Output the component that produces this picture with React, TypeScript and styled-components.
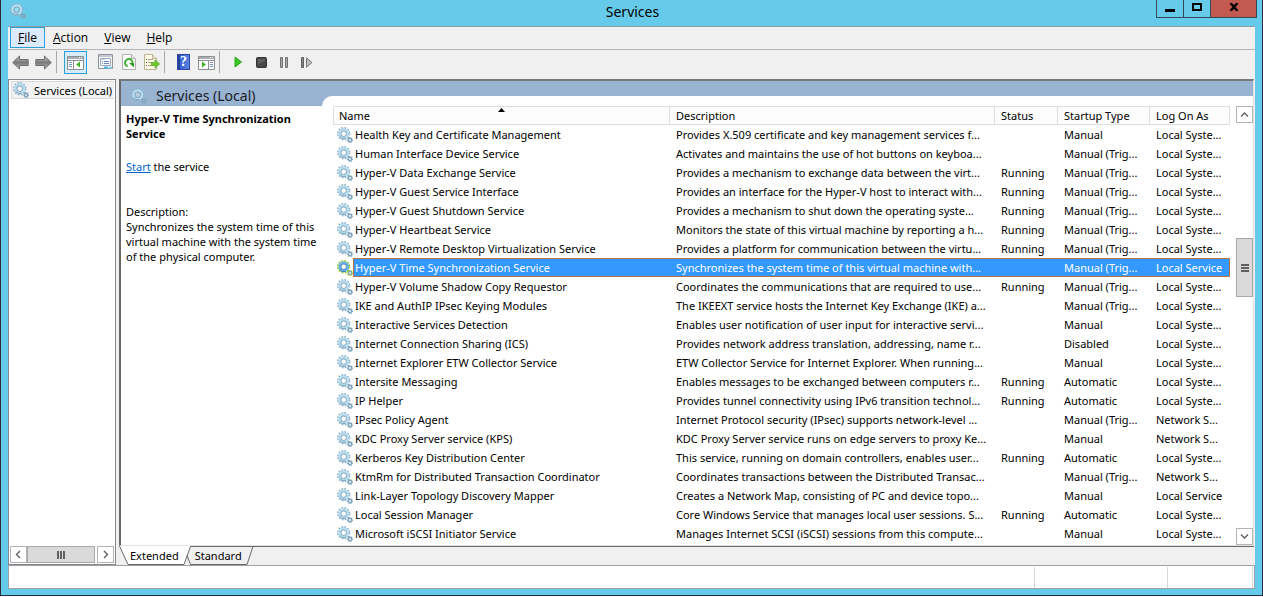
import React from 'react';
import styled, { createGlobalStyle, css } from 'styled-components';

const GlobalStyle = createGlobalStyle`
  *, *::before, *::after { box-sizing: border-box; }
  body {
    margin: 0;
    background: #ffffff;
    color: #000000;
    font: 11px/15px 'Noto Sans', 'Open Sans', sans-serif;
  }
  button { font: inherit; color: inherit; }
  svg { flex: none; }
`;

const line = '#a0a0a0';

const Desktop = styled.div`
  display: flex;
  flex-direction: column;
  min-height: 100vh;
  padding-bottom: 1px;
`;

const Window = styled.div`
  flex: 1;
  display: flex;
  flex-direction: column;
  padding: 0 7px 6px;
  background: #66caea;
  border: solid #2b2b3a;
  border-width: 0 1px 1px;
`;

const TitleBar = styled.header`
  display: grid;
  grid-template-columns: 1fr auto 1fr;
  align-items: start;
  height: 26px;
  padding: 0 0 0 2px;
`;

const TitleIcon = styled.span`
  display: flex;
  padding-top: 3px;
`;

const Title = styled.h1`
  margin: 0;
  font-size: 14px;
  font-weight: 400;
  line-height: 24px;
`;

const WindowButtons = styled.div`
  display: flex;
  justify-content: flex-end;
  margin-right: -2px;
`;

const WindowButton = styled.button<{ $close?: boolean }>`
  display: flex;
  align-items: center;
  justify-content: center;
  width: ${p => (p.$close ? 47 : 28)}px;
  height: 18px;
  margin-left: -1px;
  padding: 0 0 3px;
  background: ${p => (p.$close ? '#c35a50' : 'transparent')};
  border: 1px solid #2f4a55;
  border-top: 0;
`;

const MenuBar = styled.nav`
  display: flex;
  height: 24px;
  padding: 0 2px 1px;
  background: #f0f0f0;
  border: solid #8a9fa8;
  border-width: 1px 0;
  border-bottom-color: #b4b4b8;
`;

const MenuButton = styled.button<{ $active?: boolean }>`
  padding: 0 7px;
  font-size: 12px;
  font-family: 'Open Sans', sans-serif;
  background: ${p => (p.$active ? '#dbeafc' : 'transparent')};
  border: 1px solid ${p => (p.$active ? '#2f9fdc' : 'transparent')};
`;

const ToolBar = styled.div`
  display: flex;
  align-items: center;
  height: 29px;
  padding: 0 1px 5px;
  background: #f0f0f0;
`;

const ToolButton = styled.button<{ $active?: boolean }>`
  display: flex;
  align-items: center;
  justify-content: center;
  width: 23px;
  height: 23px;
  padding: 0;
  background: ${p => (p.$active ? '#d5ecfb' : 'transparent')};
  border: ${p => (p.$active ? '1px solid #2f9fdc' : '0')};
`;

const ToolSeparator = styled.span`
  width: 1px;
  height: 22px;
  margin: 0 7px 0 1px;
  background: #a8a8a8;
`;

const ToolGap = styled.span`
  width: 7px;
`;

const Body = styled.main`
  flex: 1;
  display: grid;
  grid-template-columns: 108px 1fr;
  column-gap: 3px;
  padding-right: 1px;
  background: #f0f0f0;
`;

const TreePane = styled.aside`
  display: flex;
  flex-direction: column;
  min-width: 0;
  background: #ffffff;
  border: 1px solid #828790;
`;

const TreeItem = styled.button`
  display: flex;
  align-items: center;
  gap: 5px;
  height: 18px;
  margin: 1px 1px 0 2px;
  padding: 0 0 0 1px;
  white-space: nowrap;
  background: #f2f2f2;
  border: 1px solid #dadada;
  border-right: 0;
`;

const Spacer = styled.div<{ $grow?: number }>`
  flex: ${p => p.$grow ?? 1};
`;

const ScrollButton = styled.button`
  display: flex;
  align-items: center;
  justify-content: center;
  width: 17px;
  height: 17px;
  padding: 0;
  background: #ffffff;
  border: 1px solid #b4b4b4;
`;

const HorizontalScroll = styled.div`
  display: flex;
  padding: 0 1px 1px;
`;

const Grip = styled.span<{ $vertical?: boolean }>`
  width: 8px;
  height: 8px;
  background: repeating-linear-gradient(
    ${p => (p.$vertical ? '180deg' : '90deg')},
    #606060 0 2px,
    transparent 2px 3px
  );
`;

const scrollThumb = css`
  display: flex;
  align-items: center;
  justify-content: center;
  background: #dadada;
  border: 1px solid #a8a8a8;
`;

const HorizontalThumb = styled.div`
  ${scrollThumb}
  flex: 1;
  margin-right: 2px;
`;

const VerticalThumb = styled.div`
  ${scrollThumb}
  height: 59px;
`;

const ResultArea = styled.div`
  display: flex;
  flex-direction: column;
  min-width: 0;
`;

const ResultPane = styled.section`
  flex: 1;
  display: grid;
  grid-template-columns: 201px 1fr;
  background: #99b4d1;
  border: solid #696969;
  border-width: 2px 1px 1px 2px;
  border-top-color: #75787c;
  border-right-color: #e3e3e3;
  border-bottom-color: #e3e3e3;
`;

const ExtendedColumn = styled.div`
  display: flex;
  flex-direction: column;
`;

const Heading = styled.h2`
  display: flex;
  align-items: center;
  gap: 9px;
  height: 25px;
  margin: 0;
  padding: 5px 0 0 10px;
  color: #1a1a28;
  font-size: 14px;
  font-weight: 400;
  line-height: 20px;
`;

const Details = styled.div`
  flex: 1;
  padding: 5px 0 0 5px;
  background: #ffffff;
  white-space: nowrap;
`;

const ServiceTitle = styled.h3`
  margin: 0 0 18px;
  font-size: 11px;
  font-weight: 700;
`;

const Paragraph = styled.p`
  margin: 0 0 30px;
`;

const StartLink = styled.a`
  color: #0066cc;
  text-decoration: underline;
`;

const ListPanel = styled.div`
  display: flex;
  align-items: stretch;
  gap: 6px;
  min-width: 0;
  margin-top: 15px;
  padding: 10px 0 0 11px;
  background: #ffffff;
  border-top-left-radius: 10px;
`;

const TableArea = styled.div`
  flex: 1;
  min-width: 0;
`;

const Table = styled.table`
  width: 100%;
  table-layout: fixed;
  border-collapse: separate;
  border-spacing: 0;
  white-space: nowrap;
`;

const Col = styled.col<{ $width?: number }>`
  width: ${p => (p.$width ? `${p.$width}px` : 'auto')};
`;

const HeadCell = styled.th`
  height: 19px;
  padding: 0 0 0 6px;
  text-align: left;
  font-weight: 400;
  background: #fcfcfc;
  border: solid #dedede;
  border-width: 1px 1px 1px 0;
  &:first-child { border-left-width: 1px; padding: 0 5px; }
`;

const SortHeader = styled.div`
  display: grid;
  grid-template-columns: 1fr auto 1fr;
  align-items: start;
`;

const selectedStyle = css`
  color: #ffffff;
  background: #3399ff;
  border: solid #b8743c;
  border-width: 1px 0;
`;

const Cell = styled.td`
  height: 19px;
  padding: 0 0 0 6px;
  overflow: hidden;
`;

const NameCell = styled.td`
  height: 19px;
  padding: 0 0 0 4px;
`;

const NameContent = styled.div`
  display: flex;
  align-items: center;
  height: 19px;
`;

const NameLabel = styled.span`
  flex: 1;
  height: 19px;
  padding-left: 2px;
  line-height: 19px;
`;

const Row = styled.tr<{ $selected: boolean }>`
  ${p =>
    p.$selected &&
    css`
      ${Cell} { ${selectedStyle} }
      ${Cell}:last-child { border-right-width: 1px; }
      ${NameLabel} {
        ${selectedStyle}
        border-left-width: 1px;
        padding-left: 1px;
        line-height: 17px;
      }
    `}
`;

const VerticalScroll = styled.div`
  display: flex;
  flex-direction: column;
  width: 17px;
`;

const Tabs = styled.div`
  display: flex;
  height: 19px;
`;

const Tab = styled.button`
  display: flex;
  align-items: stretch;
  padding: 0;
  background: transparent;
  border: 0;
`;

const TabLabel = styled.span<{ $current?: boolean }>`
  padding: ${p => (p.$current ? '2px' : '1px')} 2px 0 1px;
  line-height: 16px;
  background: ${p => (p.$current ? '#ffffff' : '#f0f0f0')};
  border: solid #696969;
  border-width: ${p => (p.$current ? '0 0 1px' : '1px 0')};
`;

const TabRule = styled.div`
  flex: 1;
  border-top: 1px solid #696969;
`;

const StatusBar = styled.footer`
  display: grid;
  grid-template-columns: 1fr 133px 85px 1px;
  height: 24px;
  padding-top: 1px;
  background: #ffffff;
  border: 1px solid ${line};
`;

const StatusPart = styled.span`
  border-right: 1px solid #d7d7d7;
`;

function Gears({ selected = false }: { selected?: boolean }) {
  const teeth = selected ? '#9acb1c' : '#8db2c8';
  const body = selected ? '#6db4e6' : '#b9def0';
  const hole = selected ? '#2f78b8' : '#7299b3';
  return (
    <svg width="16" height="16" viewBox="0 0 16 16" fill="none" aria-hidden="true">
      <circle cx="6.7" cy="6.7" r="5.7" stroke={teeth} strokeWidth="2" strokeDasharray="1.7 1.284" />
      <circle cx="6.7" cy="6.7" r="4.2" stroke={body} strokeWidth="2.6" />
      <circle cx="6.7" cy="6.7" r="2.8" fill="#ffffff" fillOpacity=".35" stroke={hole} strokeWidth=".9" />
      <path d="M2.6 9.4A4.9 4.9 0 0 0 8.7 11.2" stroke={hole} strokeWidth=".9" />
      <circle cx="13" cy="13" r="2.4" stroke={teeth} strokeWidth="1.4" strokeDasharray="1.1 .785" />
      <circle cx="13" cy="13" r="1.6" stroke="#7fa3b9" strokeWidth="1.4" />
    </svg>
  );
}

function Arrow({ forward = false }: { forward?: boolean }) {
  return (
    <svg width="17" height="15" viewBox="0 0 17 15" aria-hidden="true">
      <defs>
        <linearGradient id="arrow-fill" x1="0" y1="0" x2="0" y2="1">
          <stop offset="0" stopColor="#c4c4c4" />
          <stop offset=".5" stopColor="#7a7a7a" />
          <stop offset="1" stopColor="#b4b4b4" />
        </linearGradient>
      </defs>
      <path
        d={forward ? 'M16.3 7.5 9.5 1v3.5H.8v6h8.7V14z' : 'M.7 7.5 7.5 1v3.5h8.7v6H7.5V14z'}
        fill="url(#arrow-fill)"
        stroke="#707070"
      />
    </svg>
  );
}

function PaneIcon({ mirrored = false }: { mirrored?: boolean }) {
  return (
    <svg width="17" height="15" viewBox="0 0 17 15" aria-hidden="true">
      <path d="M.5 1.5h16v13H.5z" fill="#fff" stroke="#8c8f94" />
      <path d="M1 2h15v2H1z" fill="#a9adb3" />
      <path d="M12 2.5h1M14 2.5h1" stroke="#fff" />
      <path d="M1 5.5h15" stroke="#8c8f94" />
      {mirrored ? (
        <>
          <path d="M10.5 6v8" stroke="#8c8f94" />
          <path d="M12 7.5h3M12 9.5h3M12 11.5h3" stroke="#7393c0" />
          <path d="M4 6.5v6l4-3z" fill="#43b02a" />
        </>
      ) : (
        <>
          <path d="M6.5 6v8" stroke="#8c8f94" />
          <path d="M2 7.5h3M2 9.5h3M2 11.5h3" stroke="#7393c0" />
          <path d="M13 6.5v6l-4-3z" fill="#43b02a" />
        </>
      )}
    </svg>
  );
}

function PropertiesIcon() {
  return (
    <svg width="16" height="16" viewBox="0 0 16 16" aria-hidden="true">
      <path d="M.5.5h14v14H.5z" fill="#f7f8fa" stroke="#90949a" />
      <path d="M1 1h13v2H1z" fill="#c5c9cf" />
      <path d="M2.5 4.5h10v7h-10z" fill="#fff" stroke="#9aa9bd" />
      <path d="M3 5h4v1H3z" fill="#c8d4e4" />
      <path d="M4 7.5h1M6 7.5h5M4 9.5h1M6 9.5h5" stroke="#6c87b0" />
      <path d="M6 13.5h4" stroke="#49b8ec" strokeWidth="2" />
      <path d="M11 13.5h3" stroke="#8ed2f2" strokeWidth="2" />
    </svg>
  );
}

function RefreshIcon() {
  return (
    <svg width="14" height="16" viewBox="0 0 14 16" fill="none" aria-hidden="true">
      <path d="M.5.5h9l4 4v11H.5z" fill="#fdfdfd" stroke="#b0b0b0" />
      <path d="M9.5.5v4h4" fill="#e8e8e8" stroke="#b0b0b0" />
      <path d="M5.6 12.2A3.7 3.7 0 1 1 10.4 9.4" stroke="#3fae35" strokeWidth="2" />
      <path d="M7 9h5v4.5z" fill="#2f9a2a" />
    </svg>
  );
}

function ExportIcon() {
  return (
    <svg width="16" height="16" viewBox="0 0 16 16" aria-hidden="true">
      <path d="M.5.5h8l4 4v11H.5z" fill="#fffbe2" stroke="#b9b39a" />
      <path d="M8.5.5v4h4" fill="#efe9cc" stroke="#b9b39a" />
      <path d="M2 5.5h1M2 8.5h1M2 11.5h1" stroke="#555" />
      <path d="M4 5.5h5M4 8.5h4M4 11.5h5" stroke="#a9a58e" />
      <path d="M7.5 8.5h3.5V5.8L15.6 10 11 14.2v-2.7H7.5z" fill="#6fc92c" stroke="#4fa51f" strokeWidth=".7" />
    </svg>
  );
}

const HelpBadge = styled.span`
  width: 13px;
  height: 16px;
  color: #ffffff;
  background: linear-gradient(90deg, #24409c 2px, #3a63d0 2px, #5a82e2);
  border: 1px solid #2a479f;
  font: 700 14px/14px 'Liberation Serif', serif;
  text-align: center;
`;

function PlayIcon() {
  return (
    <svg width="9" height="12" viewBox="0 0 9 12" aria-hidden="true">
      <path d="M1 1v10l6.5-5z" fill="#35c81e" stroke="#2da31c" />
    </svg>
  );
}

function StopIcon() {
  return (
    <svg width="11" height="11" viewBox="0 0 11 11" aria-hidden="true">
      <rect x=".5" y=".5" width="10" height="10" rx="1" fill="#484848" stroke="#333" />
      <path d="M2 2h7v2L2 7z" fill="#606060" />
    </svg>
  );
}

function PauseIcon() {
  return (
    <svg width="9" height="11" viewBox="0 0 9 11" aria-hidden="true">
      <path d="M.5.5h2v10h-2zM5.5.5h2v10h-2z" fill="#a8a8a8" stroke="#727272" />
    </svg>
  );
}

function RestartIcon() {
  return (
    <svg width="13" height="11" viewBox="0 0 13 11" aria-hidden="true">
      <path d="M.5.5h2v10h-2z" fill="#888" stroke="#606060" />
      <path d="M5.5.8v9.4l5.5-4.7z" fill="#bdbdbd" stroke="#7a7a7a" />
    </svg>
  );
}

const chevrons = {
  up: 'M1 6.5 4.5 3 8 6.5',
  down: 'M1 2.5 4.5 6 8 2.5',
  left: 'M6 1 2.5 4.5 6 8',
  right: 'M3 1l3.5 3.5L3 8',
};

function Chevron({ to }: { to: keyof typeof chevrons }) {
  return (
    <svg width="9" height="9" viewBox="0 0 9 9" fill="none" aria-hidden="true">
      <path d={chevrons[to]} stroke="#606060" strokeWidth="1.4" />
    </svg>
  );
}

type Service = [name: string, description: string, status: string, startup: string, logOn: string];

const SYS = 'Local Syste...';
const NET = 'Network S...';
const TRIG = 'Manual (Trig...';

const services: Service[] = [
  ['Health Key and Certificate Management', 'Provides X.509 certificate and key management services f...', '', 'Manual', SYS],
  ['Human Interface Device Service', 'Activates and maintains the use of hot buttons on keyboa...', '', TRIG, SYS],
  ['Hyper-V Data Exchange Service', 'Provides a mechanism to exchange data between the virt...', 'Running', TRIG, SYS],
  ['Hyper-V Guest Service Interface', 'Provides an interface for the Hyper-V host to interact with...', 'Running', TRIG, SYS],
  ['Hyper-V Guest Shutdown Service', 'Provides a mechanism to shut down the operating syste...', 'Running', TRIG, SYS],
  ['Hyper-V Heartbeat Service', 'Monitors the state of this virtual machine by reporting a h...', 'Running', TRIG, SYS],
  ['Hyper-V Remote Desktop Virtualization Service', 'Provides a platform for communication between the virtu...', 'Running', TRIG, SYS],
  ['Hyper-V Time Synchronization Service', 'Synchronizes the system time of this virtual machine with...', '', TRIG, 'Local Service'],
  ['Hyper-V Volume Shadow Copy Requestor', 'Coordinates the communications that are required to use...', 'Running', TRIG, SYS],
  ['IKE and AuthIP IPsec Keying Modules', 'The IKEEXT service hosts the Internet Key Exchange (IKE) a...', '', TRIG, SYS],
  ['Interactive Services Detection', 'Enables user notification of user input for interactive servi...', '', 'Manual', SYS],
  ['Internet Connection Sharing (ICS)', 'Provides network address translation, addressing, name r...', '', 'Disabled', SYS],
  ['Internet Explorer ETW Collector Service', 'ETW Collector Service for Internet Explorer. When running...', '', 'Manual', SYS],
  ['Intersite Messaging', 'Enables messages to be exchanged between computers r...', 'Running', 'Automatic', SYS],
  ['IP Helper', 'Provides tunnel connectivity using IPv6 transition technol...', 'Running', 'Automatic', SYS],
  ['IPsec Policy Agent', 'Internet Protocol security (IPsec) supports network-level ...', '', TRIG, NET],
  ['KDC Proxy Server service (KPS)', 'KDC Proxy Server service runs on edge servers to proxy Ke...', '', 'Manual', NET],
  ['Kerberos Key Distribution Center', 'This service, running on domain controllers, enables user...', 'Running', 'Automatic', SYS],
  ['KtmRm for Distributed Transaction Coordinator', 'Coordinates transactions between the Distributed Transac...', '', TRIG, NET],
  ['Link-Layer Topology Discovery Mapper', 'Creates a Network Map, consisting of PC and device topo...', '', 'Manual', 'Local Service'],
  ['Local Session Manager', 'Core Windows Service that manages local user sessions. S...', 'Running', 'Automatic', SYS],
  ['Microsoft iSCSI Initiator Service', 'Manages Internet SCSI (iSCSI) sessions from this compute...', '', 'Manual', SYS],
];

const SELECTED = 'Hyper-V Time Synchronization Service';

export default function App() {
  return (
    <Desktop>
      <GlobalStyle />
      <Window>
        <TitleBar>
          <TitleIcon><Gears /></TitleIcon>
          <Title>Services</Title>
          <WindowButtons>
            <WindowButton aria-label="Minimize">
              <svg width="10" height="10" viewBox="0 0 10 10"><path d="M0 7h10v3H0z" /></svg>
            </WindowButton>
            <WindowButton aria-label="Maximize">
              <svg width="10" height="8" viewBox="0 0 10 8"><path d="M1 1h8v6H1z" fill="none" stroke="#000" strokeWidth="2" /></svg>
            </WindowButton>
            <WindowButton $close aria-label="Close">
              <svg width="10" height="8" viewBox="0 0 10 8"><path d="M1.5 0l7 8M8.5 0l-7 8" stroke="#000" strokeWidth="2.4" /></svg>
            </WindowButton>
          </WindowButtons>
        </TitleBar>

        <MenuBar>
          <MenuButton $active><u>F</u>ile</MenuButton>
          <MenuButton><u>A</u>ction</MenuButton>
          <MenuButton><u>V</u>iew</MenuButton>
          <MenuButton><u>H</u>elp</MenuButton>
        </MenuBar>

        <ToolBar>
          <ToolButton aria-label="Back"><Arrow /></ToolButton>
          <ToolButton aria-label="Forward"><Arrow forward /></ToolButton>
          <ToolSeparator />
          <ToolButton $active aria-label="Show or hide console tree"><PaneIcon /></ToolButton>
          <ToolGap />
          <ToolButton aria-label="Properties"><PropertiesIcon /></ToolButton>
          <ToolButton aria-label="Refresh"><RefreshIcon /></ToolButton>
          <ToolButton aria-label="Export list"><ExportIcon /></ToolButton>
          <ToolSeparator />
          <ToolButton aria-label="Help"><HelpBadge>?</HelpBadge></ToolButton>
          <ToolButton aria-label="Show or hide action pane"><PaneIcon mirrored /></ToolButton>
          <ToolSeparator />
          <ToolButton aria-label="Start service"><PlayIcon /></ToolButton>
          <ToolButton aria-label="Stop service"><StopIcon /></ToolButton>
          <ToolButton aria-label="Pause service"><PauseIcon /></ToolButton>
          <ToolButton aria-label="Restart service"><RestartIcon /></ToolButton>
        </ToolBar>

        <Body>
          <TreePane>
            <TreeItem><Gears />Services (Local)</TreeItem>
            <Spacer />
            <HorizontalScroll>
              <ScrollButton aria-label="Scroll left"><Chevron to="left" /></ScrollButton>
              <HorizontalThumb><Grip /></HorizontalThumb>
              <ScrollButton aria-label="Scroll right"><Chevron to="right" /></ScrollButton>
            </HorizontalScroll>
          </TreePane>

          <ResultArea>
            <ResultPane>
              <ExtendedColumn>
                <Heading><Gears />Services (Local)</Heading>
                <Details>
                  <ServiceTitle>Hyper-V Time Synchronization<br />Service</ServiceTitle>
                  <Paragraph><StartLink href="#start">Start</StartLink> the service</Paragraph>
                  <Paragraph>
                    Description:<br />
                    Synchronizes the system time of this<br />
                    virtual machine with the system time<br />
                    of the physical computer.
                  </Paragraph>
                </Details>
              </ExtendedColumn>

              <ListPanel>
                <TableArea>
                  <Table>
                    <colgroup>
                      <Col $width={337} />
                      <Col />
                      <Col $width={63} />
                      <Col $width={92} />
                      <Col $width={80} />
                    </colgroup>
                    <thead>
                      <tr>
                        <HeadCell aria-sort="ascending">
                          <SortHeader>
                            Name
                            <svg width="7" height="4" viewBox="0 0 7 4" aria-hidden="true"><path d="M3.5 0 7 4H0z" /></svg>
                          </SortHeader>
                        </HeadCell>
                        <HeadCell>Description</HeadCell>
                        <HeadCell>Status</HeadCell>
                        <HeadCell>Startup Type</HeadCell>
                        <HeadCell>Log On As</HeadCell>
                      </tr>
                    </thead>
                    <tbody>
                      {services.map(([name, description, status, startup, logOn]) => (
                        <Row key={name} $selected={name === SELECTED}>
                          <NameCell>
                            <NameContent>
                              <Gears selected={name === SELECTED} />
                              <NameLabel>{name}</NameLabel>
                            </NameContent>
                          </NameCell>
                          <Cell>{description}</Cell>
                          <Cell>{status}</Cell>
                          <Cell>{startup}</Cell>
                          <Cell>{logOn}</Cell>
                        </Row>
                      ))}
                    </tbody>
                  </Table>
                </TableArea>
                <VerticalScroll>
                  <ScrollButton aria-label="Scroll up"><Chevron to="up" /></ScrollButton>
                  <Spacer $grow={1} />
                  <VerticalThumb><Grip $vertical /></VerticalThumb>
                  <Spacer $grow={2} />
                  <ScrollButton aria-label="Scroll down"><Chevron to="down" /></ScrollButton>
                </VerticalScroll>
              </ListPanel>
            </ResultPane>

            <Tabs>
              <Tab>
                <svg width="10" height="19" viewBox="0 0 10 19" aria-hidden="true">
                  <path d="M0 0h10v19H9z" fill="#fff" />
                  <path d="M.5 0 9 18.5h1" fill="none" stroke="#696969" />
                </svg>
                <TabLabel $current>Extended</TabLabel>
              </Tab>
              <Tab>
                <svg width="13" height="19" viewBox="0 0 13 19" aria-hidden="true">
                  <path d="M0 0h9L3 19H0z" fill="#fff" />
                  <path d="M0 18.5h3L9.5.5H13M6 9.5 9.5 18.5H13" fill="none" stroke="#696969" />
                </svg>
                <TabLabel>Standard</TabLabel>
                <svg width="10" height="19" viewBox="0 0 10 19" aria-hidden="true">
                  <path d="M0 18.5h3L9 .5M0 .5h10" fill="none" stroke="#696969" />
                </svg>
              </Tab>
              <TabRule />
            </Tabs>
          </ResultArea>
        </Body>

        <StatusBar>
          <StatusPart />
          <StatusPart />
          <StatusPart />
        </StatusBar>
      </Window>
    </Desktop>
  );
}
